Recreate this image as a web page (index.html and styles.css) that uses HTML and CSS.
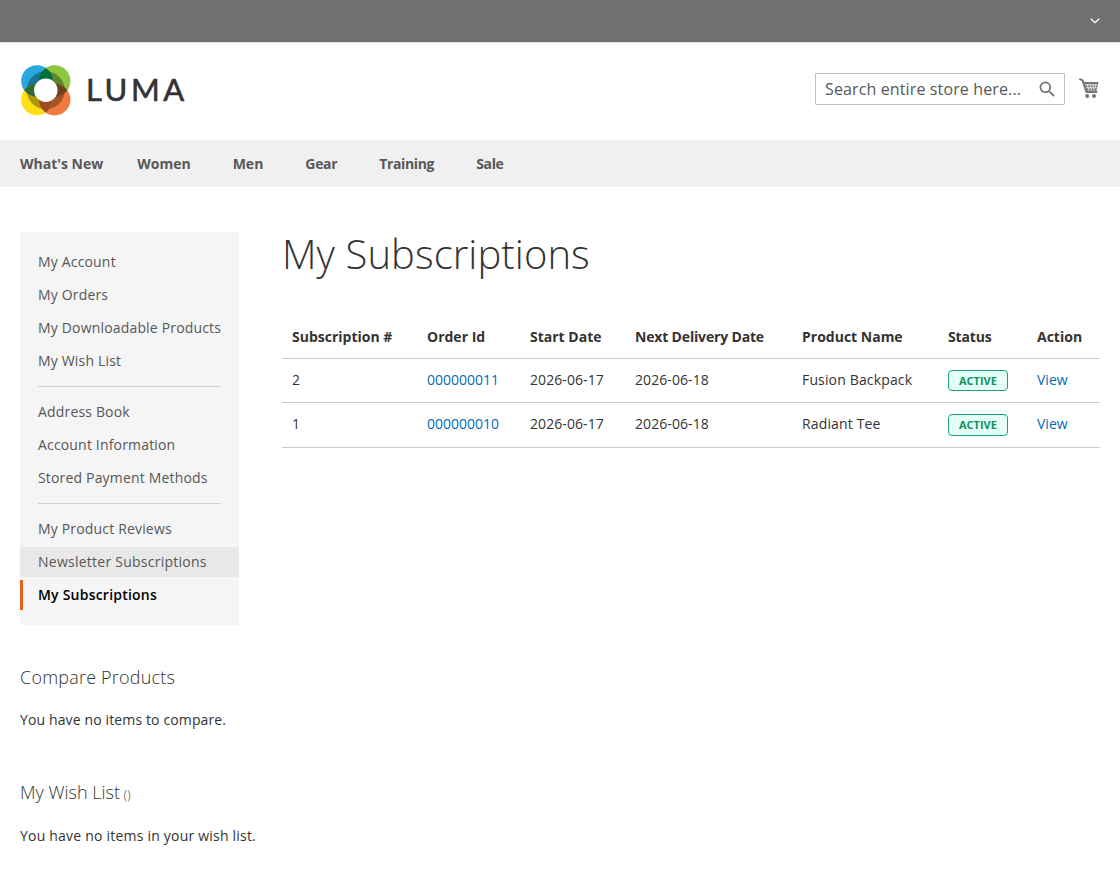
FILE: index.html
```html
<!DOCTYPE html>
<html lang="en">

<head>
    <meta charset="UTF-8">
    <meta name="viewport" content="width=device-width, initial-scale=1.0">
    <title>My Subscriptions</title>
    <link rel="stylesheet" href="styles.css">
</head>

<body>
    <header class="page-header">
        <div class="panel">
            <button class="switch" aria-label="Account menu">
                <svg width="10" height="6" viewBox="0 0 10 6"><path d="M0.7 0.7 L5 4.7 L9.3 0.7" /></svg>
            </button>
        </div>
        <div class="header-content">
            <a class="logo" href="#">
                <svg width="50" height="51" viewBox="0 0 50 51">
                    <circle cx="16" cy="16" r="15.8" fill="#27a8e0" />
                    <circle cx="33.6" cy="16" r="15.8" fill="#8cc63f" />
                    <circle cx="33.6" cy="34.6" r="15.8" fill="#f37a3e" />
                    <circle cx="16" cy="34.6" r="15.8" fill="#ffde17" />
                    <circle class="ring" cx="24.8" cy="25.3" r="19" />
                    <path fill="#2f6b35" d="M3.2 25.3 A15.8 15.8 0 0 1 28.8 25.3 A15.8 15.8 0 0 1 3.2 25.3" />
                    <path fill="#6b4423" d="M20.8 25.3 A15.8 15.8 0 0 1 46.4 25.3 A15.8 15.8 0 0 1 20.8 25.3" />
                    <path fill="#9e4a22" d="M24.8 21.5 A15.8 15.8 0 0 1 24.8 47.7 A15.8 15.8 0 0 1 24.8 21.5" />
                    <path fill="#006f3a" d="M24.8 2.9 A15.8 15.8 0 0 1 24.8 29.1 A15.8 15.8 0 0 1 24.8 2.9" />
                    <circle cx="24.8" cy="25.3" r="11.7" fill="#fff" />
                </svg>
                <span class="logo-text">LUMA</span>
            </a>
            <form class="search">
                <input type="text" placeholder="Search entire store here...">
                <svg width="16" height="16" viewBox="0 0 16 16"><circle cx="6.3" cy="6.3" r="4.9" /><path d="M9.8 9.8 L15 15" /></svg>
            </form>
            <a class="minicart" href="#" aria-label="My Cart">
                <svg width="20" height="21" viewBox="0 0 20 21">
                    <path class="frame" d="M1 1.2 L3.6 2.4 L7.4 14 H17.6" />
                    <path d="M4 3.9 H19.5 L17.5 12.8 H6.8 Z" />
                    <path class="mesh" d="M6 6.8 H18.4 M6.8 9.8 H17.8 M8.6 6.8 L8.9 9.6 M11.4 6.8 L11.2 9.6 M14.3 6.8 L13.7 9.6 M9.6 9.8 V12.4 M12.4 9.8 L12.1 12.4 M15.2 9.8 L14.7 12.4 M16.8 6.8 L16.3 9.6" />
                    <circle cx="8.2" cy="18.1" r="2" />
                    <circle cx="15" cy="18.1" r="2" />
                </svg>
            </a>
        </div>
    </header>

    <nav class="navigation">
        <a class="no-children" href="#">What's New</a>
        <a href="#">Women</a>
        <a href="#">Men</a>
        <a class="tight" href="#">Gear</a>
        <a class="tight" href="#">Training</a>
        <a class="tight" href="#">Sale</a>
    </nav>

    <main class="columns">
        <aside class="sidebar">
            <ul class="account-nav">
                <li><a href="#">My Account</a></li>
                <li><a href="#">My Orders</a></li>
                <li><a href="#">My Downloadable Products</a></li>
                <li><a href="#">My Wish List</a></li>
                <li class="delimiter"></li>
                <li><a href="#">Address Book</a></li>
                <li><a href="#">Account Information</a></li>
                <li><a href="#">Stored Payment Methods</a></li>
                <li class="delimiter"></li>
                <li><a href="#">My Product Reviews</a></li>
                <li><a class="hovered" href="#">Newsletter Subscriptions</a></li>
                <li><a class="current" href="#">My Subscriptions</a></li>
            </ul>

            <section class="block compare">
                <h2>Compare Products</h2>
                <p>You have no items to compare.</p>
            </section>

            <section class="block wishlist">
                <h2>My Wish List <span class="counter">()</span></h2>
                <p>You have no items in your wish list.</p>
            </section>
        </aside>

        <div class="content">
            <h1>My Subscriptions</h1>
            <table class="subscriptions">
                <colgroup>
                    <col class="col-id">
                    <col class="col-order">
                    <col class="col-start">
                    <col class="col-next">
                    <col class="col-product">
                    <col class="col-status">
                    <col class="col-action">
                </colgroup>
                <thead>
                    <tr>
                        <th>Subscription #</th>
                        <th>Order Id</th>
                        <th>Start Date</th>
                        <th class="tight">Next Delivery Date</th>
                        <th>Product Name</th>
                        <th class="tight">Status</th>
                        <th>Action</th>
                    </tr>
                </thead>
                <tbody>
                    <tr>
                        <td>2</td>
                        <td><a href="#">000000011</a></td>
                        <td class="date">2026-06-17</td>
                        <td class="date">2026-06-18</td>
                        <td class="product">Fusion Backpack</td>
                        <td><span class="status">ACTIVE</span></td>
                        <td><a href="#">View</a></td>
                    </tr>
                    <tr>
                        <td>1</td>
                        <td><a href="#">000000010</a></td>
                        <td class="date">2026-06-17</td>
                        <td class="date">2026-06-18</td>
                        <td class="product">Radiant Tee</td>
                        <td><span class="status">ACTIVE</span></td>
                        <td><a href="#">View</a></td>
                    </tr>
                </tbody>
            </table>
        </div>
    </main>
</body>

</html>
```
FILE: styles.css
```css
* {
    box-sizing: border-box;
}

body {
    margin: 0;
    background-color: #fff;
    color: #333;
    font-family: "Open Sans", "Noto Sans", sans-serif;
    font-size: 14px;
    line-height: 20px;
}

a {
    color: #006bb4;
    text-decoration: none;
}

/* Header */
.panel {
    display: flex;
    justify-content: flex-end;
    align-items: center;
    height: 42px;
    padding: 0 20px;
    background-color: #6e716e;
}

.switch {
    display: flex;
    padding: 0;
    border: none;
    background: none;
}

.switch path {
    fill: none;
    stroke: #fff;
    stroke-width: 1.3;
}

.header-content {
    display: flex;
    align-items: center;
    height: 98px;
    padding: 0 21px;
    border-top: 1px solid #e5e5e5;
}

.logo {
    display: flex;
    align-items: center;
    margin-right: auto;
    margin-bottom: 2px;
}

.logo svg {
    display: block;
}

.logo .ring {
    fill: #000;
    fill-opacity: 0.32;
}

.logo-text {
    margin-left: 15px;
    margin-bottom: 4px;
    color: #333;
    font-family: Lato, sans-serif;
    font-size: 31px;
    letter-spacing: 3.5px;
    -webkit-text-stroke: 0.6px #333;
}

.search {
    position: relative;
    margin-right: 14px;
    margin-bottom: 6px;
}

.search input {
    display: block;
    width: 250px;
    height: 32px;
    padding: 0 28px 0 9px;
    border: 1px solid #c2c2c2;
    border-radius: 1px;
    font-family: inherit;
    font-size: 16px;
    letter-spacing: 0.13px;
}

.search input::placeholder {
    color: #575757;
}

.search svg {
    position: absolute;
    top: 8px;
    right: 10px;
    fill: none;
    stroke: #757575;
    stroke-width: 1.8;
}

.minicart {
    margin-bottom: 7px;
}

.minicart svg {
    display: block;
    fill: #757575;
}

.minicart .frame {
    fill: none;
    stroke: #757575;
    stroke-width: 2;
    stroke-linecap: round;
    stroke-linejoin: round;
}

.minicart .mesh {
    fill: none;
    stroke: #fff;
    stroke-width: 0.8;
}

/* Navigation */
.navigation {
    display: flex;
    gap: 42px;
    height: 47px;
    padding: 0 20px;
    background-color: #f0f0f0;
    font-weight: 700;
    line-height: 47px;
}

.navigation a {
    color: #575757;
}

.navigation .no-children {
    margin-right: -8px;
}

.navigation .tight {
    letter-spacing: -0.35px;
}

/* Layout */
.columns {
    display: flex;
    gap: 43px;
    padding: 45px 20px 0;
}

.sidebar {
    width: 219px;
    flex-shrink: 0;
}

.content {
    flex: 1;
}

/* Account menu */
.account-nav {
    margin: 0;
    padding: 15px 0;
    background-color: #f5f5f5;
    letter-spacing: 0.17px;
    list-style: none;
}

.account-nav li {
    margin-bottom: 3px;
}

.account-nav li:last-child {
    margin-bottom: 0;
}

.account-nav a {
    display: block;
    height: 30px;
    padding-left: 15px;
    border-left: 3px solid transparent;
    color: #575757;
    line-height: 30px;
    white-space: nowrap;
}

.account-nav .hovered {
    border-color: #e8e8e8;
    background-color: #e8e8e8;
    letter-spacing: 0.25px;
}

.account-nav .current {
    border-color: #e8601b;
    color: #000;
    font-weight: 600;
    letter-spacing: 0.22px;
}

.account-nav .delimiter {
    height: 1px;
    margin: 10px 18px;
    background-color: #d1d1d1;
}

.block {
    white-space: nowrap;
}

.block h2 {
    margin: 0;
    font-size: 18px;
    font-weight: 300;
    line-height: 24px;
}

.block p {
    margin: 0;
}

.compare {
    margin-top: 40px;
    letter-spacing: 0.13px;
}

.compare h2 {
    margin-bottom: 21px;
    letter-spacing: 0.21px;
}

.wishlist {
    margin-top: 50px;
}

.wishlist h2 {
    margin-bottom: 19px;
}

.wishlist p {
    letter-spacing: 0.21px;
}

.counter {
    margin-left: -1px;
    font-size: 12px;
    letter-spacing: 0.3px;
}

/* Subscriptions table */
h1 {
    margin: 0 0 39px;
    font-size: 40px;
    font-weight: 300;
    line-height: 44px;
    letter-spacing: 0.07px;
}

.subscriptions {
    width: 818px;
    border-collapse: collapse;
    table-layout: fixed;
}

.col-id { width: 135px; }
.col-order { width: 103px; }
.col-start { width: 105px; }
.col-next { width: 167px; }
.col-product { width: 146px; }
.col-status { width: 89px; }
.col-action { width: 73px; }

.subscriptions th,
.subscriptions td {
    padding: 11px 10px;
    border-bottom: 1px solid #ccc;
    text-align: left;
    vertical-align: top;
    white-space: nowrap;
}

.subscriptions th {
    padding-top: 12px;
}

.subscriptions .tight {
    letter-spacing: -0.17px;
}

.subscriptions .date {
    letter-spacing: 0.08px;
}

.subscriptions .product {
    letter-spacing: 0.15px;
}

.status {
    display: inline-block;
    padding: 0 10px;
    border: 1px solid #1aa179;
    border-radius: 4px;
    background-color: #e5fff5;
    color: #119066;
    font-size: 11px;
    font-weight: 700;
    line-height: 20px;
}

tbody tr:first-child .status {
    line-height: 19px;
}
```
